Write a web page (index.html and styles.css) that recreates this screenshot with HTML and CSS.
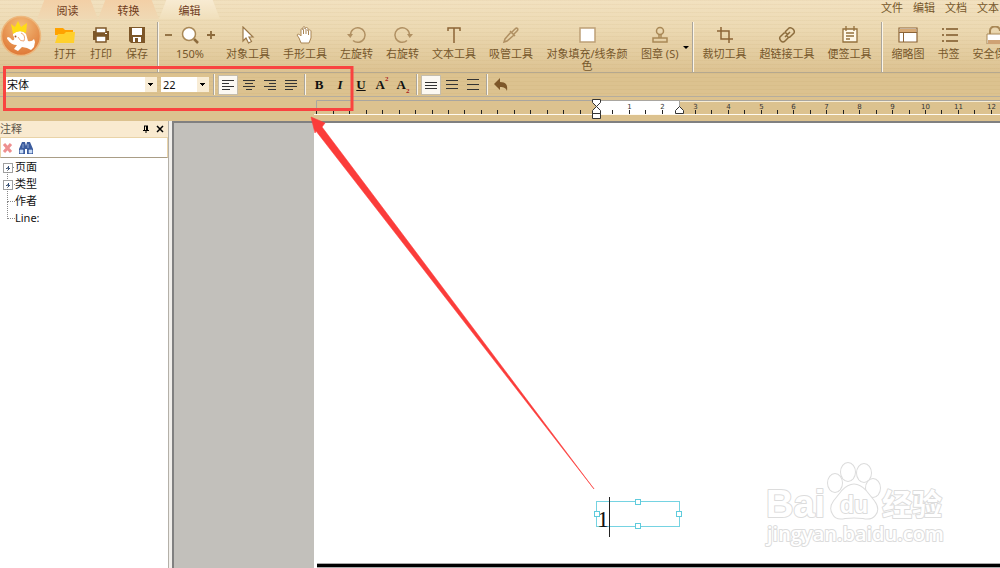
FILE: index.html
```html
<!DOCTYPE html>
<html lang="zh-CN">
  <head>
    <meta charset="UTF-8" />
    <meta name="viewport" content="width=device-width, initial-scale=1.0" />
    <title>PDF 编辑</title>
    <link rel="stylesheet" href="styles.css">
  </head>
  <body>
    <div class="app">
      <header class="ribbon">
        <svg class="logo" viewBox="0 0 42 42" aria-hidden="true">
          <defs>
            <radialGradient id="logoFill" cx="50%" cy="25%" r="75%">
              <stop offset="0" stop-color="#f3bd7b" />
              <stop offset="1" stop-color="#df7836" />
            </radialGradient>
          </defs>
          <circle cx="21" cy="21" r="19.500" fill="url(#logoFill)" stroke="#edb77c" stroke-width="1.500" />
          <path d="M8 25 Q6 23 8 22 Q10 22 12 25 Q15 26 14 22 Q11 18 16 17 Q22 14 26 19 L28 26 Q32 27 34 24 L35 27 L34 32 L31 35 L27 33 L22 32 L18 36 L14 34 L17 30 Q11 30 8 25Z" fill="#fff" />
          <path d="M21 18 Q26 20 24 26 Q20 27 18 22" fill="none" stroke="#eda878" />
          <circle cx="15.500" cy="21.500" r="1" fill="#a65324" />
          <path d="M13 19 L11 9 L15 12 L18 6 L21 12 L27 8 L26 18 Q19 14 13 19Z" fill="#ffdc16" />
        </svg>

        <div class="tabRow">
          <button class="tab">阅读</button>
          <button class="tab">转换</button>
          <button class="tab active">编辑</button>
          <nav class="menu">
            <a href="#">文件</a>
            <a href="#">编辑</a>
            <a href="#">文档</a>
            <a href="#">文本</a>
          </nav>
        </div>

        <div class="tools">
          <div class="group files">
            <button class="tool">
              <svg viewBox="0 0 20 18"><path d="M0 2h8l2 2h8v5H0z" fill="#ffa200" /><path d="M0 17 3 8h6l2-2h9l-1 11z" fill="#ffd02c" /></svg>
              <span>打开</span>
            </button>
            <button class="tool">
              <svg viewBox="0 0 20 18"><path d="M2 5h16v9H2z" fill="#7d5729" /><path d="M5 2h10v5H5zM5 10h10v6H5z" fill="#fff" stroke="#7d5729" stroke-width="1.500" /><path d="M14 7h2v1h-2z" fill="#fff" /></svg>
              <span>打印</span>
            </button>
            <button class="tool">
              <svg viewBox="0 0 20 18"><path d="M2 1h16v16H4l-2-2z" fill="#7d5729" /><path d="M5 2h10v7H5zM6 11h8v5H6z" fill="#fff" /><path d="M8 12h3v4H8z" fill="#7d5729" /></svg>
              <span>保存</span>
            </button>
          </div>
          <div class="divider"></div>
          <div class="group zoom">
            <div class="zoomRow">
              <button class="zoomBtn" aria-label="缩小"><svg viewBox="0 0 10 18"><path d="M1 9h7" stroke="#8c6a3c" stroke-width="1.800" /></svg></button>
              <svg class="lens" viewBox="0 0 20 18"><path d="M14 13l4 4" stroke="#8c6a3c" stroke-width="2.500" /><circle cx="9" cy="8" r="6.500" fill="#fff" stroke="#a98856" stroke-width="1.500" /></svg>
              <button class="zoomBtn" aria-label="放大"><svg viewBox="0 0 10 18"><path d="M1 9h8M5 5v8" stroke="#8c6a3c" stroke-width="1.800" /></svg></button>
            </div>
            <span>150%</span>
          </div>
          <div class="group">
            <button class="tool">
              <svg viewBox="0 0 20 18"><path d="M5 1v14l3-3 2.500 5 3-1.500-2.500-4.500h4z" fill="#fff" stroke="#9b7848" stroke-width="1.200" /></svg>
              <span>对象工具</span>
            </button>
            <button class="tool">
              <svg viewBox="0 0 20 18"><path d="M6 17 4 12 2 9c1-2 3 0 4 1V4c0-2 2-2 2 0V2c0-2 2-2 2 0v1c0-2 3-2 3 0v2c0-2 3-1 3 0v7l-2 5z" fill="#fff" stroke="#a98554" /><path d="M8.500 4v4M11 3v5M13.500 5v4" stroke="#a98554" /></svg>
              <span>手形工具</span>
            </button>
            <button class="tool">
              <svg viewBox="0 0 20 18" fill="none" stroke="#b09062" stroke-width="1.500"><path d="M6 14.500a7.300 7.300 0 1 0-2.500-5.500" /><path d="M0 8h6L3.300 12z" fill="#b09062" stroke="none" /></svg>
              <span>左旋转</span>
            </button>
            <button class="tool">
              <svg viewBox="0 0 20 18" fill="none" stroke="#b09062" stroke-width="1.500"><path d="M14 14.500a7.300 7.300 0 1 1 2.500-5.500" /><path d="M20 8h-6l2.700 4z" fill="#b09062" stroke="none" /></svg>
              <span>右旋转</span>
            </button>
            <button class="tool">
              <svg viewBox="0 0 20 18"><path d="M4 5V2h12v3M10 2v15" fill="none" stroke="#8c6436" stroke-width="1.500" /></svg>
              <span>文本工具</span>
            </button>
            <button class="tool">
              <svg viewBox="0 0 20 18" fill="none" stroke="#b09062" stroke-width="1.500"><path d="M10 6l-6 7-1 3 3-1 7-6M9 5l5 5M11 6l3-3c2-2 4 0 2 2l-3 3" /></svg>
              <span>吸管工具</span>
            </button>
            <button class="tool wide">
              <svg viewBox="0 0 20 18"><path d="M3 2h15v14H3z" fill="#fff" stroke="#bda077" stroke-width="1.500" /></svg>
              <span>对象填充/线条颜<br>色</span>
            </button>
            <button class="tool">
              <svg viewBox="0 0 20 18" fill="none" stroke="#a98856" stroke-width="1.500"><circle cx="10" cy="5" r="3.500" /><path d="M9 8v4M11 8v4M3 12h14v4H3z" /></svg>
              <span>图章 (S)</span>
            </button>
            <button class="more" aria-label="更多图章"></button>
          </div>
          <div class="divider"></div>
          <div class="group">
            <button class="tool">
              <svg viewBox="0 0 20 18" fill="none" stroke="#8c6436" stroke-width="1.500"><path d="M6 1v12h12M2 5h12v12" /></svg>
              <span>裁切工具</span>
            </button>
            <button class="tool">
              <svg viewBox="0 0 20 18" fill="none" stroke="#8c6c3c" stroke-width="1.500"><path d="M8 6l4-4q2-1 4 1t1 4l-4 4q-2 1-3-1M12 11l-4 4q-2 2-4 0t-1-4l4-4q2-1 3 1M8 11l5-5" /></svg>
              <span>超链接工具</span>
            </button>
            <button class="tool">
              <svg viewBox="0 0 20 18" fill="none" stroke="#94703c" stroke-width="1.300"><path d="M3 3h14v13H3z" fill="#fff8e8" /><path d="M6 0v5M14 0v5M6 7h8M6 10h8M6 13h4" /></svg>
              <span>便签工具</span>
            </button>
          </div>
          <div class="divider"></div>
          <div class="group">
            <button class="tool">
              <svg viewBox="0 0 20 18"><path d="M1 2h18v14H1z" fill="#fff" stroke="#8c6436" stroke-width="1.200" /><path d="M2 3h16v3H2z" fill="#d7aa76" /><path d="M1 6.500h18M5.500 7v9" stroke="#8c6436" /></svg>
              <span>缩略图</span>
            </button>
            <button class="tool">
              <svg viewBox="0 0 20 18"><path d="M3 3h2M7 3h12M3 9h2M7 9h12M3 15h2M7 15h12" stroke="#7d5729" stroke-width="1.500" /></svg>
              <span>书签</span>
            </button>
            <button class="tool">
              <svg viewBox="0 0 20 18"><path d="M5 8V5c0-6 10-6 10 0" fill="none" stroke="#a98856" stroke-width="2" /><path d="M2 8h18v10H2z" fill="#fff" stroke="#a98856" /><path d="M3 14h17v4H3z" fill="#cfa274" /></svg>
              <span>安全保护</span>
            </button>
          </div>
        </div>
      </header>

      <div class="formatBar">
        <select class="fontName" aria-label="字体"><option>宋体</option></select>
        <select class="fontSize" aria-label="字号"><option>22</option></select>
        <div class="divider"></div>
        <div class="marks">
          <button class="on" aria-label="左对齐"><svg viewBox="0 0 14 14"><path d="M1 2.500h12M1 5.500h7M1 8.500h12M1 11.500h8" /></svg></button>
          <button aria-label="居中"><svg viewBox="0 0 14 14"><path d="M1 2.500h12M3 5.500h8M1 8.500h12M4 11.500h6" /></svg></button>
          <button aria-label="右对齐"><svg viewBox="0 0 14 14"><path d="M1 2.500h12M6 5.500h7M1 8.500h12M5 11.500h8" /></svg></button>
          <button aria-label="两端对齐"><svg viewBox="0 0 14 14"><path d="M1 2.500h12M1 5.500h12M1 8.500h12M1 11.500h8" /></svg></button>
        </div>
        <div class="divider"></div>
        <div class="marks">
          <button>B</button>
          <button><i>I</i></button>
          <button><u>U</u></button>
          <button>A<sup>2</sup></button>
          <button>A<sub>2</sub></button>
        </div>
        <div class="divider"></div>
        <div class="marks">
          <button class="on" aria-label="单倍行距"><svg viewBox="0 0 14 14"><path d="M1 4.500h12M1 7.500h12M1 10.500h12" /></svg></button>
          <button aria-label="1.5 倍行距"><svg viewBox="0 0 14 14"><path d="M1 2.500h12M1 6.500h12M1 10.500h12" /></svg></button>
          <button aria-label="双倍行距"><svg viewBox="0 0 14 14"><path d="M1 1.500h12M1 6.500h12M1 11.500h12" /></svg></button>
        </div>
        <div class="divider"></div>
        <div class="marks">
          <button aria-label="撤销"><svg viewBox="0 0 14 14"><path class="undo" d="M0 6 6 0v4c6 0 8 3 7 9-1-3-3-4-7-4v3z" /></svg></button>
        </div>
      </div>

      <div class="rulerBar">
        <svg id="ruler" class="ruler" aria-hidden="true">
          <path d="M2.500 15V3.500H2000" fill="none" stroke="#a9a6a0" />
          <path d="M365 4.500H2000" stroke="#f6ecd6" />
          <path d="M282 4h83v13h-83z" fill="#fff" />
          <path d="M365.500 4v13" stroke="#a9a6a0" />
          <path d="M0 17.500H2000" stroke="#fffaf0" />
          <g id="ticks"></g>
          <g fill="#fff" stroke="#333">
            <path d="M278.500 2.500h8v3l-4 4-4-4zM278.500 16.500v-3l4-4 4 4v3zM278.500 16.500h8v5h-8zM361.500 16.500v-3l4-4 4 4v3z" />
          </g>
        </svg>
      </div>

      <main class="workspace">
        <aside class="panel">
          <div class="panelTitle">
            <span>注释</span>
            <button aria-label="固定"><svg viewBox="0 0 10 10"><path d="M3 2h4M3.500 2v4M6.500 2v4M5.500 2v4M2 6.500h6M5 7v2" stroke="#000" fill="none" /></svg></button>
            <button aria-label="关闭"><svg viewBox="0 0 10 10"><path d="M2 2l6 6M8 2 2 8" stroke="#000" stroke-width="1.500" /></svg></button>
          </div>
          <div class="panelTools">
            <button aria-label="删除"><svg viewBox="0 0 14 14"><path d="M3 3l7 8M10 3l-7 8" stroke="#ee8f8f" stroke-width="3" /></svg></button>
            <button aria-label="查找"><svg viewBox="0 0 14 14"><path d="M3 1h3l1 4 1-4h3l3 7v5H8V8H6v5H0V8z" fill="#3b5c9e" /><path d="M1 9h3v3H1zM10 9h3v3h-3zM4 3v4M9 3v4" fill="#c9dcf5" stroke="#c9dcf5" stroke-width=".6" /></svg></button>
          </div>
          <ul class="tree">
            <li class="branch">页面</li>
            <li class="branch">类型</li>
            <li>作者</li>
            <li>Line:</li>
          </ul>
        </aside>
        <div class="splitter"></div>
        <section class="canvas">
          <div class="page">
            <div class="textBox">
              <span>1</span>
              <i class="caret"></i>
              <i class="handle top"></i>
              <i class="handle right"></i>
              <i class="handle bottom"></i>
              <i class="handle left"></i>
            </div>
            <svg class="watermark" viewBox="0 0 190 94">
              <g fill="#fff" stroke="#dcdcdc" stroke-width="2" paint-order="stroke" stroke-linejoin="round">
                <text class="brand" x="4" y="56">Bai</text>
                <ellipse cx="73" cy="22" rx="7" ry="9" />
                <ellipse cx="86" cy="11" rx="7" ry="9" />
                <ellipse cx="102" cy="12" rx="7" ry="9" />
                <ellipse cx="111" cy="27" rx="7" ry="9" />
                <path d="M80 30q12-13 24 0l8 10q6 8 1 14-4 5-12 3-9-1-18 0-9 2-12-4-4-6 1-13z" />
                <text class="du" x="78" y="52">du</text>
                <text class="cjk" x="120" y="54">经验</text>
                <text class="site" x="5" y="80">jingyan.baidu.com</text>
              </g>
            </svg>
          </div>
        </section>
      </main>

      <!-- red callout over the font settings -->
      <svg class="callout" aria-hidden="true">
        <path d="M4.500 67.500H352V109.500H4.500z" fill="none" stroke="#f94340" stroke-width="3" />
        <path d="M311 117 325 123 322 127 594 489 316 131 315 133z" fill="#fb3c3a" stroke="#fb3c3a" stroke-width=".6" />
      </svg>
    </div>

    <script>
      const ruler = document.getElementById("ruler");
      const ticks = document.getElementById("ticks");
      const unit = 32.9;
      const origin = 282.5;

      const addShape = (name, attrs, text) => {
        const shape = document.createElementNS("http://www.w3.org/2000/svg", name);
        for (const key in attrs) shape.setAttribute(key, attrs[key]);
        if (text) shape.textContent = text;
        ticks.append(shape);
      };

      const drawTicks = () => {
        ticks.innerHTML = "";
        const last = Math.floor(((ruler.clientWidth - origin) * 2) / unit);
        for (let i = -17; i <= last; i++) {
          const x = Math.round(origin + (i * unit) / 2 - 0.5) + 0.5;
          if (i !== 0 && i !== 5) addShape("path", { d: `M${x} 13v4`, stroke: "#222" });
          if (i > 0 && i % 2 === 0) addShape("text", { x, y: 12 }, String(i / 2));
        }
      };

      drawTicks();
      window.addEventListener("resize", drawTicks);
    </script>
  </body>
</html>
```

FILE: styles.css
```css
* {
  box-sizing: border-box;
}

body {
  margin: 0;
  font-family: "Noto Sans", "Noto Sans CJK SC", sans-serif;
  font-size: 11px;
  line-height: 12px;
  color: #76572b;
}

button {
  padding: 0;
  border: none;
  background: none;
  font: inherit;
  color: inherit;
  cursor: pointer;
}

svg {
  display: block;
}

.app {
  position: relative;
  display: flex;
  flex-direction: column;
  height: 100vh;
  overflow: hidden;
}

.ribbon {
  position: relative;
  flex: none;
  border-bottom: 1px solid #b5a88f;
  background: repeating-linear-gradient(rgba(150, 110, 40, 0.05) 0 1px, transparent 1px 4px),
    linear-gradient(#f2e1c0, #ecd9b2 40%, #dcc291);
}

.logo {
  position: absolute;
  left: 0;
  top: 15px;
  width: 42px;
  height: 42px;
}

.tabRow {
  display: flex;
  height: 20px;
  padding-left: 37px;
}

.tab {
  width: 61px;
  height: 19px;
  padding-top: 2px;
  color: #713d1d;
  background: linear-gradient(#f3cfa6, #efd9b4);
  clip-path: polygon(12% 0, 88% 0, 100% 100%, 0 100%);
}

.tab.active {
  background: linear-gradient(#f8ebd2, #f0dfbb);
}

.menu {
  display: flex;
  gap: 10px;
  margin-left: auto;
  padding: 2px 1px 0 0;
}

.menu a {
  color: inherit;
  text-decoration: none;
}

.tools {
  display: flex;
  height: 52px;
  padding: 2px 0 0 54px;
  overflow: hidden;
  white-space: nowrap;
}

.group {
  display: flex;
  flex: none;
  gap: 13px;
  padding-top: 4px;
}

.group.files {
  gap: 14px;
}

.tool {
  display: flex;
  flex-direction: column;
  align-items: center;
  gap: 4px;
}

.tool svg,
.lens {
  width: 20px;
  height: 18px;
}

.wide {
  width: 82px;
}

.more {
  align-self: flex-start;
  margin: 20px -6px 0 -9px;
  border: 3px solid transparent;
  border-top-color: #000;
}

.divider {
  flex: none;
  width: 2px;
  margin: 0 9px;
  border-left: 1px solid #aaa59b;
  background-color: #fbf5e8;
}

.group.zoom {
  flex-direction: column;
  align-items: center;
  gap: 4px;
  width: 52px;
  margin: 0 10px 0 -4px;
}

.zoomRow {
  display: flex;
  justify-content: space-between;
  width: 100%;
}

.zoomBtn svg {
  width: 10px;
  height: 18px;
}

.formatBar {
  display: flex;
  flex: none;
  align-items: center;
  height: 24px;
  padding-left: 5px;
  border-bottom: 1px solid #b5ad9d;
  background: repeating-linear-gradient(rgba(150, 110, 40, 0.05) 0 1px, transparent 1px 4px), #dcc28f;
}

.formatBar .divider {
  height: 21px;
  margin: 0 3px;
}

.formatBar select {
  appearance: none;
  height: 15px;
  padding: 0 2px;
  border: none;
  border-radius: 0;
  font: inherit;
  color: #111;
  background: linear-gradient(#000, #000) right 4px top 6px / 5px 1px no-repeat,
    linear-gradient(#000, #000) right 5px top 7px / 3px 1px no-repeat,
    linear-gradient(#000, #000) right 6px top 8px / 1px 1px no-repeat,
    linear-gradient(#f8ecd5, #f8ecd5) right / 12px 100% no-repeat, #fff;
}

.formatBar .fontName {
  width: 152px;
  margin-right: 4px;
}

.formatBar .fontSize {
  width: 48px;
  margin-right: 1px;
}

.marks {
  display: flex;
  gap: 1px;
}

.marks button {
  display: flex;
  align-items: center;
  justify-content: center;
  width: 20px;
  height: 20px;
  font: bold 13px "Liberation Serif", serif;
  color: #111;
}

.marks .on {
  border: 1px solid #c5bdac;
  background-color: #fbf8f2;
}

.marks svg {
  width: 14px;
  height: 14px;
  stroke: #333;
}

.marks .undo {
  fill: #7d5729;
  stroke: none;
}

.marks sup,
.marks sub {
  font-size: 7px;
  color: #a8181a;
}

.marks sup {
  align-self: flex-start;
}

.marks sub {
  align-self: flex-end;
}

.rulerBar {
  flex: none;
  height: 24px;
  padding-left: 314px;
  background-color: #dcc28f;
}

.ruler {
  width: 100%;
  height: 24px;
}

.ruler text {
  font: 7px "DejaVu Sans", sans-serif;
  text-anchor: middle;
  fill: #333;
}

.workspace {
  display: grid;
  flex: 1;
  grid-template-columns: 169px 3px 1fr;
  min-height: 0;
}

.panel {
  border-right: 1px solid #b4b0a8;
  background-color: #fff;
}

.panelTitle {
  display: flex;
  align-items: center;
  gap: 4px;
  height: 16px;
  padding-right: 3px;
  color: #5b5449;
  background-color: #f9ead0;
}

.panelTitle span {
  margin-right: auto;
}

.panelTitle svg {
  width: 10px;
  height: 10px;
}

.panelTools {
  display: flex;
  gap: 4px;
  align-items: center;
  height: 21px;
  border: 1px solid #e9d3a8;
  border-bottom-color: #a99d86;
}

.panelTools svg {
  width: 14px;
  height: 14px;
}

.tree {
  position: relative;
  margin: 0;
  padding: 0 0 0 15px;
  list-style: none;
  line-height: 17px;
  color: #111;
}

.tree li {
  position: relative;
}

/* dotted guide lines */
.tree li::before {
  content: "";
  position: absolute;
  left: -8px;
  top: -8px;
  width: 7px;
  height: 17px;
  border-left: 1px dotted #888;
  border-bottom: 1px dotted #888;
}

.tree li:first-child::before {
  top: 8px;
  height: 1px;
  border-left: none;
}

.tree .branch::after {
  content: "";
  position: absolute;
  left: -12px;
  top: 5px;
  width: 8px;
  height: 8px;
  border: 1px solid #a0a0a0;
  background: linear-gradient(#33517e, #33517e) center / 4px 1px no-repeat,
    linear-gradient(#33517e, #33517e) center / 1px 4px no-repeat, #fff;
}

.splitter {
  background-color: #f1efeb;
}

.canvas {
  display: flex;
  padding-left: 140px;
  border-top: 2px solid #808080;
  border-left: 2px solid #808080;
  background-color: #c2c0bb;
}

.page {
  position: relative;
  flex: 1;
  background: linear-gradient(#000, #000) 3px calc(100% - 1px) / 100% 3px no-repeat,
    linear-gradient(#aaa, #aaa) 3px 100% / 100% 5px no-repeat, #fff;
}

.textBox {
  position: absolute;
  left: 282px;
  top: 378px;
  width: 84px;
  height: 26px;
  border: 1px solid #75d3e2;
  font: 24px "Liberation Serif", serif;
  line-height: 34px;
  color: #111;
}

.caret {
  position: absolute;
  left: 12px;
  top: -5px;
  width: 1px;
  height: 40px;
  background-color: #222;
}

.handle {
  position: absolute;
  width: 6px;
  height: 6px;
  border: 1px solid #5fcbdc;
  background-color: #fff;
}

.top,
.bottom {
  left: calc(50% - 3px);
}

.left,
.right {
  top: calc(50% - 3px);
}

.top {
  top: -3px;
}

.right {
  right: -3px;
}

.bottom {
  bottom: -3px;
}

.left {
  left: -3px;
}

.watermark {
  position: absolute;
  right: 48px;
  bottom: 13px;
  width: 190px;
  height: 94px;
}

.watermark .brand {
  font: bold 38px "Liberation Sans", sans-serif;
}

.watermark .du {
  font: bold 23px "Liberation Sans", sans-serif;
}

.watermark .cjk {
  font: bold 30px "Noto Sans CJK SC", sans-serif;
}

.watermark .site {
  font: 600 20px "Open Sans", sans-serif;
}

.callout {
  position: absolute;
  inset: 0;
  width: 100%;
  height: 100%;
  pointer-events: none;
}
```
